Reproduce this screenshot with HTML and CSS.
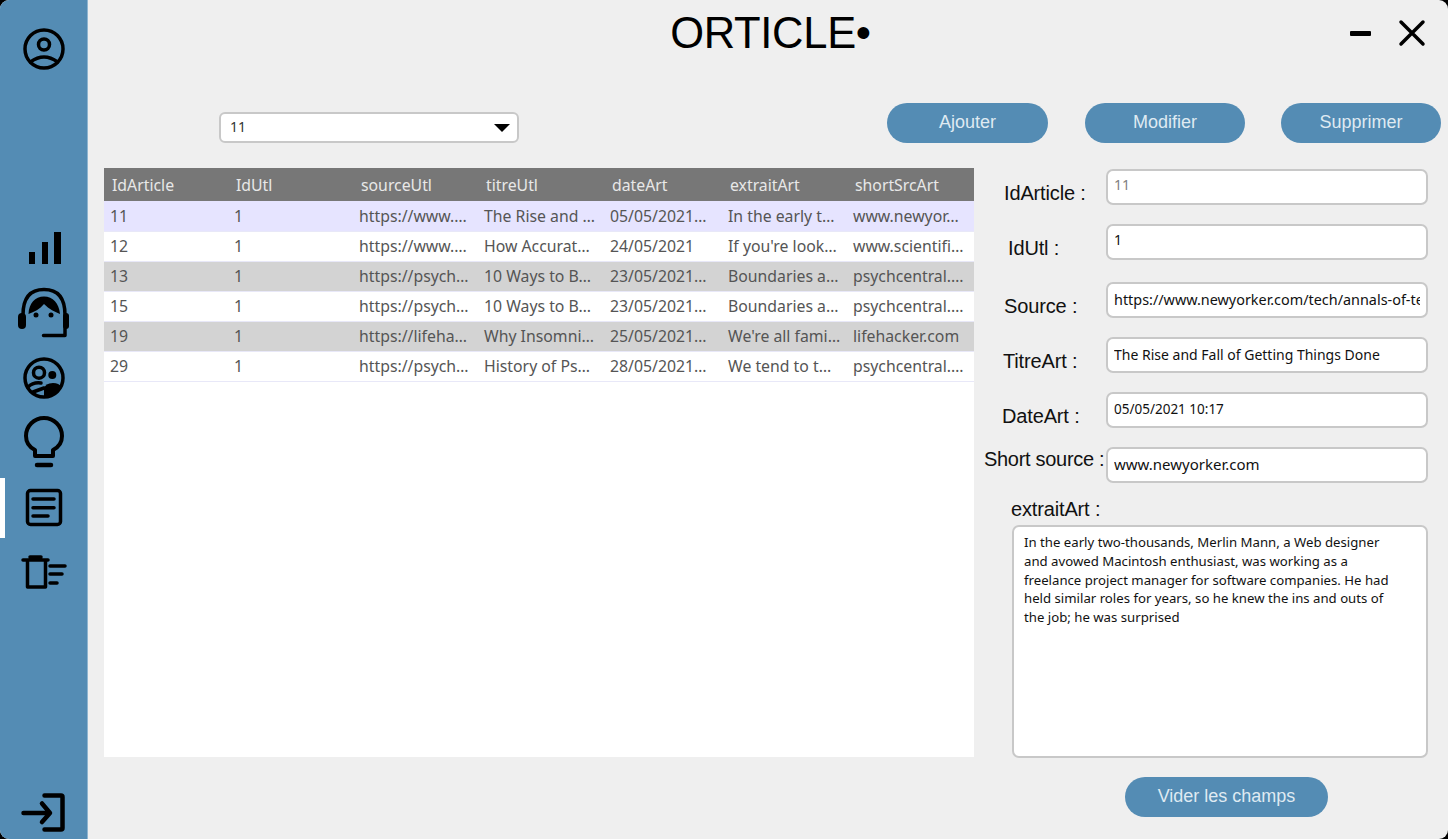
FILE: index.html
```html
<!DOCTYPE html>
<html lang="fr">
<head>
    <meta charset="UTF-8">
    <meta name="viewport" content="width=device-width, initial-scale=1.0">
    <title>Orticle</title>
    <link rel="stylesheet" href="styles.css">
</head>
<body>
<div class="window">
    <aside class="sidebar">
        <a class="side-item side-profile">
            <svg width="48" height="48" viewBox="0 0 48 48" class="ic">
                <circle cx="24" cy="24" r="19"/>
                <circle cx="24" cy="19.5" r="5.5"/>
                <path d="M10.5 37Q24 27 37.5 37"/>
            </svg>
        </a>
        <nav class="side-nav">
            <a class="side-item">
                <svg width="48" height="48" viewBox="0 0 48 48" class="fill">
                    <rect x="9" y="28" width="6" height="12"/>
                    <rect x="22" y="18" width="6" height="22"/>
                    <rect x="34" y="8" width="7" height="32"/>
                </svg>
            </a>
            <a class="side-item">
                <svg width="56" height="56" viewBox="0 0 56 56" class="ic">
                    <path d="M7 30C7 12 15 4.5 28 4.5C41 4.5 49 12 49 30V50.5H27.5"/>
                    <rect class="solid" x="2" y="28" width="8" height="16" rx="4"/>
                    <rect class="solid" x="47" y="28" width="6" height="16" rx="3"/>
                    <path class="solid" d="M12.5 29C13 18 19 11.5 28 11.5C37 11.5 43 18 44 29C39 27 33 24 28 19C24 24 18 27 12.5 29Z"/>
                    <circle class="solid" cx="20" cy="30" r="2.5"/>
                    <circle class="solid" cx="35" cy="30" r="2.5"/>
                </svg>
            </a>
            <a class="side-item">
                <svg width="48" height="48" viewBox="0 0 48 48" class="ic">
                    <circle cx="24" cy="24" r="19"/>
                    <circle cx="19" cy="18.7" r="5.5"/>
                    <circle class="solid" cx="32.3" cy="21" r="4"/>
                    <path class="solid" d="M24 42V35Q25 29 33 29Q39 29 41.5 33A19 19 0 0 1 24 43Z"/>
                    <path d="M8 33Q13 28 21 29M13 38L24 34"/>
                </svg>
            </a>
            <a class="side-item">
                <svg width="56" height="56" viewBox="0 0 56 56" class="ic ic-bulb">
                    <path d="M19 41V35C13 32 10 27 10 21A18 18 0 0 1 46 21C46 27 43 32 37 35V41Z"/>
                    <path class="thick" d="M21 50H35"/>
                </svg>
            </a>
            <a class="side-item active">
                <svg width="48" height="48" viewBox="0 0 48 48" class="ic">
                    <rect x="7.5" y="6.5" width="33" height="34" rx="3"/>
                    <path d="M13 15H34M13 23.7H34M13 32H28"/>
                </svg>
            </a>
            <a class="side-item">
                <svg width="48" height="48" viewBox="0 0 48 48" class="ic">
                    <path d="M3 11H28M10 8H21M7.5 13V38H25.5V13"/>
                    <path d="M30 17H45M30 25H42M30 34H37"/>
                </svg>
            </a>
        </nav>
        <a class="side-item side-exit">
            <svg width="48" height="48" viewBox="0 0 48 48" class="ic">
                <path class="thick" d="M3.5 24H29M22 14.5L30 24L22 33M24.5 6.5H41Q42.5 6.5 42.5 8V39Q42.5 40.5 41 40.5H24.5"/>
            </svg>
        </a>
    </aside>

    <main class="main">
        <header class="topbar">
            <div></div>
            <h1 class="title">ORTICLE•</h1>
            <div class="win-controls">
                <span class="win-min"></span>
                <svg width="28" height="28" viewBox="0 0 28 28" class="ic">
                    <path d="M3 3L25 25M25 3L3 25"/>
                </svg>
            </div>
        </header>

        <div class="toolbar">
            <div class="select-wrap">
                <select class="select">
                    <option>11</option>
                </select>
            </div>
            <div class="actions">
                <button class="btn btn-add">Ajouter</button>
                <button class="btn">Modifier</button>
                <button class="btn">Supprimer</button>
            </div>
        </div>

        <div class="content">
            <div class="table-wrap">
                <table class="grid">
                    <colgroup>
                        <col class="c1"><col class="c2"><col class="c3"><col class="c4"><col class="c5"><col class="c6"><col class="c7">
                    </colgroup>
                    <thead>
                        <tr><th>IdArticle</th><th>IdUtl</th><th>sourceUtl</th><th>titreUtl</th><th>dateArt</th><th>extraitArt</th><th>shortSrcArt</th></tr>
                    </thead>
                    <tbody>
                        <tr class="selected"><td>11</td><td>1</td><td>https://www.…</td><td>The Rise and …</td><td>05/05/2021…</td><td>In the early t…</td><td>www.newyor…</td></tr>
                        <tr><td>12</td><td>1</td><td>https://www.…</td><td>How Accurat…</td><td>24/05/2021</td><td>If you're look…</td><td>www.scientifi…</td></tr>
                        <tr class="alt"><td>13</td><td>1</td><td>https://psych…</td><td>10 Ways to B…</td><td>23/05/2021…</td><td>Boundaries a…</td><td>psychcentral.…</td></tr>
                        <tr><td>15</td><td>1</td><td>https://psych…</td><td>10 Ways to B…</td><td>23/05/2021…</td><td>Boundaries a…</td><td>psychcentral.…</td></tr>
                        <tr class="alt"><td>19</td><td>1</td><td>https://lifeha…</td><td>Why Insomni…</td><td>25/05/2021…</td><td>We're all fami…</td><td>lifehacker.com</td></tr>
                        <tr><td>29</td><td>1</td><td>https://psych…</td><td>History of Ps…</td><td>28/05/2021…</td><td>We tend to t…</td><td>psychcentral.…</td></tr>
                    </tbody>
                </table>
            </div>

            <form class="form">
                <div class="row">
                    <label class="lbl lbl-article">IdArticle :</label>
                    <input class="field field-ro" type="text" value="11">
                </div>
                <div class="row">
                    <label class="lbl lbl-utl">IdUtl :</label>
                    <input class="field" type="text" value="1">
                </div>
                <div class="row row-tall row-source">
                    <label class="lbl lbl-article">Source :</label>
                    <input class="field field-source" type="text" value="https://www.newyorker.com/tech/annals-of-technology/the-rise-and-fall-of-getting-things-done">
                </div>
                <div class="row row-tall">
                    <label class="lbl lbl-titre">TitreArt :</label>
                    <input class="field" type="text" value="The Rise and Fall of Getting Things Done">
                </div>
                <div class="row row-tall">
                    <label class="lbl lbl-date">DateArt :</label>
                    <input class="field field-date" type="text" value="05/05/2021 10:17">
                </div>
                <div class="row row-tall">
                    <label class="lbl lbl-short">Short source :</label>
                    <input class="field field-short" type="text" value="www.newyorker.com">
                </div>
                <label class="lbl-extrait">extraitArt :</label>
                <textarea class="area">In the early two-thousands, Merlin Mann, a Web designer
and avowed Macintosh enthusiast, was working as a
freelance project manager for software companies. He had
held similar roles for years, so he knew the ins and outs of
the job; he was surprised</textarea>
                <button type="button" class="btn btn-clear">Vider les champs</button>
            </form>
        </div>
    </main>
</div>
</body>
</html>
```

FILE: styles.css
```css
* {
    box-sizing: border-box;
}
html, body {
    margin: 0;
    padding: 0;
    height: 100%;
    background: #000;
    overflow: hidden;
}
.window {
    display: flex;
    width: 1448px;
    height: 839px;
    background: #efefef;
    border-radius: 9px;
    overflow: hidden;
    font-family: "Liberation Sans", sans-serif;
}

/* sidebar */
.sidebar {
    width: 88px;
    flex: none;
    display: flex;
    flex-direction: column;
    background: #548cb4;
    border-right: 1px solid #8fb5d0;
}
.side-item {
    position: relative;
    display: flex;
    align-items: center;
    justify-content: center;
    height: 65px;
    padding-left: 1px;
}
.side-profile {
    margin-top: 16px;
}
.side-nav {
    margin-top: 134.5px;
}
.side-exit {
    margin-top: auto;
    height: 52px;
}
.side-item.active::before {
    content: "";
    position: absolute;
    left: 0;
    top: 2px;
    width: 5px;
    height: 60px;
    background: #fff;
}
.ic {
    fill: none;
    stroke: #000;
    stroke-width: 3.5;
    stroke-linecap: round;
    stroke-linejoin: round;
}
.ic .solid {
    fill: #000;
    stroke: none;
}
.ic .thick {
    stroke-width: 4.5;
}
.ic-bulb {
    stroke-width: 4;
}
.fill {
    fill: #000;
}

/* main area */
.main {
    flex: 1;
    display: flex;
    flex-direction: column;
    min-width: 0;
}
.topbar {
    display: grid;
    grid-template-columns: 1fr auto 1fr;
    align-items: center;
    height: 66px;
    padding-left: 5px;
}
.title {
    margin: 0;
    font-size: 43.5px;
    font-weight: normal;
    color: #000;
    letter-spacing: -0.3px;
}
.win-controls {
    display: flex;
    align-items: center;
    justify-content: flex-end;
    gap: 27px;
    padding-right: 22px;
}
.win-min {
    width: 21px;
    height: 5px;
    background: #000;
    border-radius: 1px;
}
.toolbar {
    display: flex;
    align-items: flex-end;
    justify-content: space-between;
    height: 40px;
    margin-top: 37px;
    padding: 0 7px 0 131px;
}
.select-wrap {
    position: relative;
    width: 300px;
    height: 31px;
}
.select-wrap::after {
    content: "";
    position: absolute;
    right: 9px;
    top: 12px;
    border-left: 8px solid transparent;
    border-right: 8px solid transparent;
    border-top: 8px solid #000;
}
.select {
    width: 100%;
    height: 100%;
    padding: 0 9px 2px;
    appearance: none;
    background: #fff;
    border: 2px solid #c8c8c8;
    border-radius: 6px;
    font-family: "Noto Sans", sans-serif;
    font-size: 14px;
    color: #333;
}
.actions {
    display: flex;
    gap: 36px;
}
.btn {
    width: 160px;
    height: 40px;
    padding: 0 0 2px;
    border: none;
    border-radius: 20px;
    background: #548cb4;
    color: #dfeaf2;
    font-family: "Liberation Sans", sans-serif;
    font-size: 18px;
}
.btn-add {
    width: 161px;
    margin-right: 1px;
}

/* table + form */
.content {
    display: grid;
    grid-template-columns: 870px 444px;
    column-gap: 10px;
    margin-top: 25px;
    padding-left: 16px;
}
.table-wrap {
    height: 589px;
    background: #fff;
}
.grid {
    width: 870px;
    table-layout: fixed;
    border-collapse: collapse;
    font-family: "Noto Sans", sans-serif;
    font-size: 15.8px;
}
.c1 { width: 124px; }
.c2 { width: 125px; }
.c3 { width: 125px; }
.c4 { width: 126px; }
.c5 { width: 118px; }
.c6 { width: 125px; }
.c7 { width: 127px; }
.grid th {
    height: 33px;
    padding: 0 8px;
    background: #777;
    color: #e8e8e8;
    font-weight: normal;
    text-align: left;
    white-space: nowrap;
}
.grid td {
    height: 30px;
    padding: 0 6px;
    color: #555;
    border-bottom: 1px solid #e8e8f8;
    white-space: nowrap;
    overflow: hidden;
}
.grid .selected td {
    background: #e6e4ff;
}
.grid .alt td {
    background: #d3d3d3;
}
.form {
    display: flex;
    flex-direction: column;
    padding-top: 1px;
}
.row {
    display: grid;
    grid-template-columns: 122px 322px;
    height: 35px;
    margin-bottom: 20px;
    align-items: center;
}
.row-tall {
    height: 36px;
    margin-bottom: 19px;
}
.row-source {
    margin-top: 3px;
}
.lbl, .lbl-extrait {
    font-size: 20px;
    letter-spacing: -0.15px;
    color: #111;
    white-space: nowrap;
}
.lbl {
    padding-top: 13px;
}
.lbl-article { padding-left: 20px; }
.lbl-utl { padding-left: 24px; }
.lbl-titre { padding-left: 19px; }
.lbl-date { padding-left: 18px; }
.lbl-short {
    padding-top: 0;
    padding-bottom: 12px;
    letter-spacing: -0.3px;
}
.lbl-extrait {
    margin: -4px 0 4px 27px;
}
.field, .area {
    background: #fff;
    border: 2px solid #c8c8c8;
    border-radius: 7px;
    font-family: "Noto Sans", sans-serif;
    font-size: 13.2px;
    color: #111;
    outline: none;
}
.field {
    width: 322px;
    height: 100%;
    padding: 0 6px 5px;
    font-size: 14px;
}
.row-tall .field {
    padding-bottom: 2px;
}
.field-ro {
    color: #808080;
}
.field-source {
    font-size: 14.4px;
}
.field-date {
    font-size: 13.5px;
}
.field-short {
    font-size: 15px;
}
.area {
    display: block;
    width: 416px;
    height: 233px;
    margin-left: 28px;
    padding: 6px 10px;
    line-height: 18.75px;
    resize: none;
    overflow: hidden;
}
.btn-clear {
    width: 203px;
    margin: 19px 0 0 141px;
    flex: none;
}
```
